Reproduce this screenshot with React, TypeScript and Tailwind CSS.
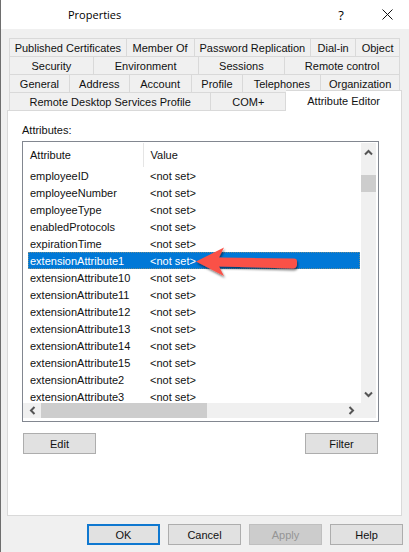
import React from "react";

type Tab = { label: string };

const tabRows: { grid: string; tabs: Tab[] }[] = [
  {
    grid: "grid-cols-[117fr_68fr_117fr_45fr_44fr]",
    tabs: [
      { label: "Published Certificates" },
      { label: "Member Of" },
      { label: "Password Replication" },
      { label: "Dial-in" },
      { label: "Object" },
    ],
  },
  {
    grid: "grid-cols-[84fr_105fr_87fr_115fr]",
    tabs: [
      { label: "Security" },
      { label: "Environment" },
      { label: "Sessions" },
      { label: "Remote control" },
    ],
  },
  {
    grid: "grid-cols-[60fr_60fr_62fr_52fr_78fr_79fr]",
    tabs: [
      { label: "General" },
      { label: "Address" },
      { label: "Account" },
      { label: "Profile" },
      { label: "Telephones" },
      { label: "Organization" },
    ],
  },
];

const attributes = [
  "employeeID",
  "employeeNumber",
  "employeeType",
  "enabledProtocols",
  "expirationTime",
  "extensionAttribute1",
  "extensionAttribute10",
  "extensionAttribute11",
  "extensionAttribute12",
  "extensionAttribute13",
  "extensionAttribute14",
  "extensionAttribute15",
  "extensionAttribute2",
  "extensionAttribute3",
];

const tabBase =
  "h-[18px] min-w-0 whitespace-nowrap border-r border-t border-[#d9d9d9] bg-[#f0f0f0] text-center leading-4";

function Chevron({ d }: { d: string }) {
  return (
    <svg viewBox="0 0 9 9" className="h-[9px] w-[9px]" fill="none" stroke="#555" strokeWidth="2">
      <path d={d} />
    </svg>
  );
}

function PushButton({
  children,
  primary,
  disabled,
}: {
  children: string;
  primary?: boolean;
  disabled?: boolean;
}) {
  const look = primary
    ? "border-2 border-[#0f78d0] bg-[#e1e1e1]"
    : disabled
      ? "border border-[#bfbfbf] bg-[#cccccc] text-[#959595]"
      : "border border-[#adadad] bg-[#e1e1e1]";
  return (
    <button
      type="button"
      disabled={disabled}
      className={"flex h-[21px] w-[73px] items-center justify-center " + look}
    >
      {children}
    </button>
  );
}

function Arrow() {
  return (
    <svg
      viewBox="0 0 110 36"
      className="pointer-events-none absolute left-[171px] top-[104px] h-[36px] w-[110px]"
      aria-hidden="true"
    >
      <defs>
        <filter id="shade" x="-10%" y="-20%" width="120%" height="160%">
          <feDropShadow dx="1" dy="2" stdDeviation="1" floodColor="#000" floodOpacity="0.5" />
        </filter>
      </defs>
      <path
        d="M2 15.500 L30 1.500 L25 11.500 L100 12.500 Q103 12.500 103 15.500 L103 19 Q102 22.500 99 22.500 L25 20.500 L30 30 Z"
        fill="#fa5147"
        filter="url(#shade)"
      />
    </svg>
  );
}

export default function App() {
  return (
    <main className="border-l border-[#6e6e6e] bg-[#f0f0f0] pb-[7px] font-['Liberation_Sans',Arial,sans-serif] text-[11px] leading-4 text-[#111]">
      <header className="flex h-[29px] items-center bg-white pr-3">
        <h1 className="flex-1 pl-[67px] font-['Open_Sans','Noto_Sans',sans-serif] text-[11px] text-black">
          Properties
        </h1>
        <button
          type="button"
          aria-label="Context help"
          className="w-6 font-['Open_Sans','Noto_Sans',sans-serif] text-[13px] text-black"
        >
          ?
        </button>
        <button type="button" aria-label="Close" className="ml-6 flex w-5 justify-center">
          <svg viewBox="0 0 11 11" className="h-[11px] w-[11px]" stroke="#111" strokeWidth="1">
            <path d="M.5 .5L10.5 10.5M10.5 .5L.5 10.5" />
          </svg>
        </button>
      </header>

      <div className="pl-[6px] pr-[7px] pt-[9px]">
        <div role="tablist" aria-label="Property pages">
          {tabRows.map((row) => (
            <div key={row.tabs[0].label} className={"ml-[2px] mr-[2px] grid border-l border-[#d9d9d9] " + row.grid}>
              {row.tabs.map((tab) => (
                <button key={tab.label} type="button" role="tab" aria-selected="false" className={tabBase}>
                  {tab.label}
                </button>
              ))}
            </div>
          ))}
          <div className="ml-[2px] grid grid-cols-[202fr_75fr_116fr] border-l border-[#d9d9d9]">
            <button type="button" role="tab" aria-selected="false" className={tabBase}>
              Remote Desktop Services Profile
            </button>
            <button type="button" role="tab" aria-selected="false" className={tabBase}>
              COM+
            </button>
            <button
              type="button"
              role="tab"
              aria-selected="true"
              className="relative z-10 -mb-px -mt-[2px] h-[21px] whitespace-nowrap border-r border-t border-[#d9d9d9] bg-white"
            >
              Attribute Editor
            </button>
          </div>
        </div>

        <section className="border border-[#d9d9d9] bg-white pb-[61px] pl-[14px] pr-[22px] pt-[11px]">
          <h2 id="attributes-label" className="h-[19px] leading-4">
            Attributes:
          </h2>

          <div className="relative border border-[#828790] bg-white pb-[3px] pr-[2px] pt-px">
            <div className="flex h-[260px] overflow-hidden">
              <div className="min-w-0 flex-1 overflow-hidden pl-[5px]">
                <table aria-labelledby="attributes-label" className="w-full table-fixed border-collapse text-left">
                  <colgroup>
                    <col className="w-[115px]" />
                    <col />
                  </colgroup>
                  <thead>
                    <tr className="h-[24px]">
                      <th className="border-r border-[#e5e5e5] p-0 pl-[2px] font-normal">Attribute</th>
                      <th className="p-0 pl-[7px] font-normal">Value</th>
                    </tr>
                  </thead>
                  <tbody>
                    {attributes.map((name) => {
                      const selected = name === "extensionAttribute1";
                      return (
                        <tr
                          key={name}
                          aria-selected={selected}
                          className={
                            selected
                              ? "h-[17px] bg-[#0078d7] text-white outline-1 -outline-offset-1 outline-dotted outline-[#6f8c8c]"
                              : "h-[17px]"
                          }
                        >
                          <td className="p-0 pl-[2px]">{name}</td>
                          <td className="p-0 pl-[7px]">&lt;not set&gt;</td>
                        </tr>
                      );
                    })}
                  </tbody>
                </table>
              </div>
              <div className="ml-px flex w-[15px] flex-col items-center bg-[#f0f0f0]">
                <button type="button" aria-label="Scroll up" className="flex h-[32px] pt-[5px]">
                  <Chevron d="M1 6.500L4.500 3L8 6.500" />
                </button>
                <div className="h-[17px] w-full bg-[#cdcdcd]" />
                <button type="button" aria-label="Scroll down" className="mt-auto pb-1">
                  <Chevron d="M1 2.500L4.500 6L8 2.500" />
                </button>
              </div>
            </div>
            <div className="flex h-[15px] items-center bg-[#f0f0f0]">
              <button type="button" aria-label="Scroll left" className="flex w-[18px] justify-center">
                <Chevron d="M6.500 1L3 4.500L6.500 8" />
              </button>
              <div className="h-full w-1/2 max-w-[166px] bg-[#cdcdcd]" />
              <button type="button" aria-label="Scroll right" className="ml-auto mr-5">
                <Chevron d="M2.500 1L6 4.500L2.500 8" />
              </button>
            </div>
            <Arrow />
          </div>

          <div className="mt-[11px] flex justify-between px-px">
            <PushButton>Edit</PushButton>
            <PushButton>Filter</PushButton>
          </div>
        </section>
      </div>

      <footer className="mt-2 flex justify-end gap-2 pr-[6px]">
        <PushButton primary>OK</PushButton>
        <PushButton>Cancel</PushButton>
        <PushButton disabled>Apply</PushButton>
        <PushButton>Help</PushButton>
      </footer>
    </main>
  );
}
